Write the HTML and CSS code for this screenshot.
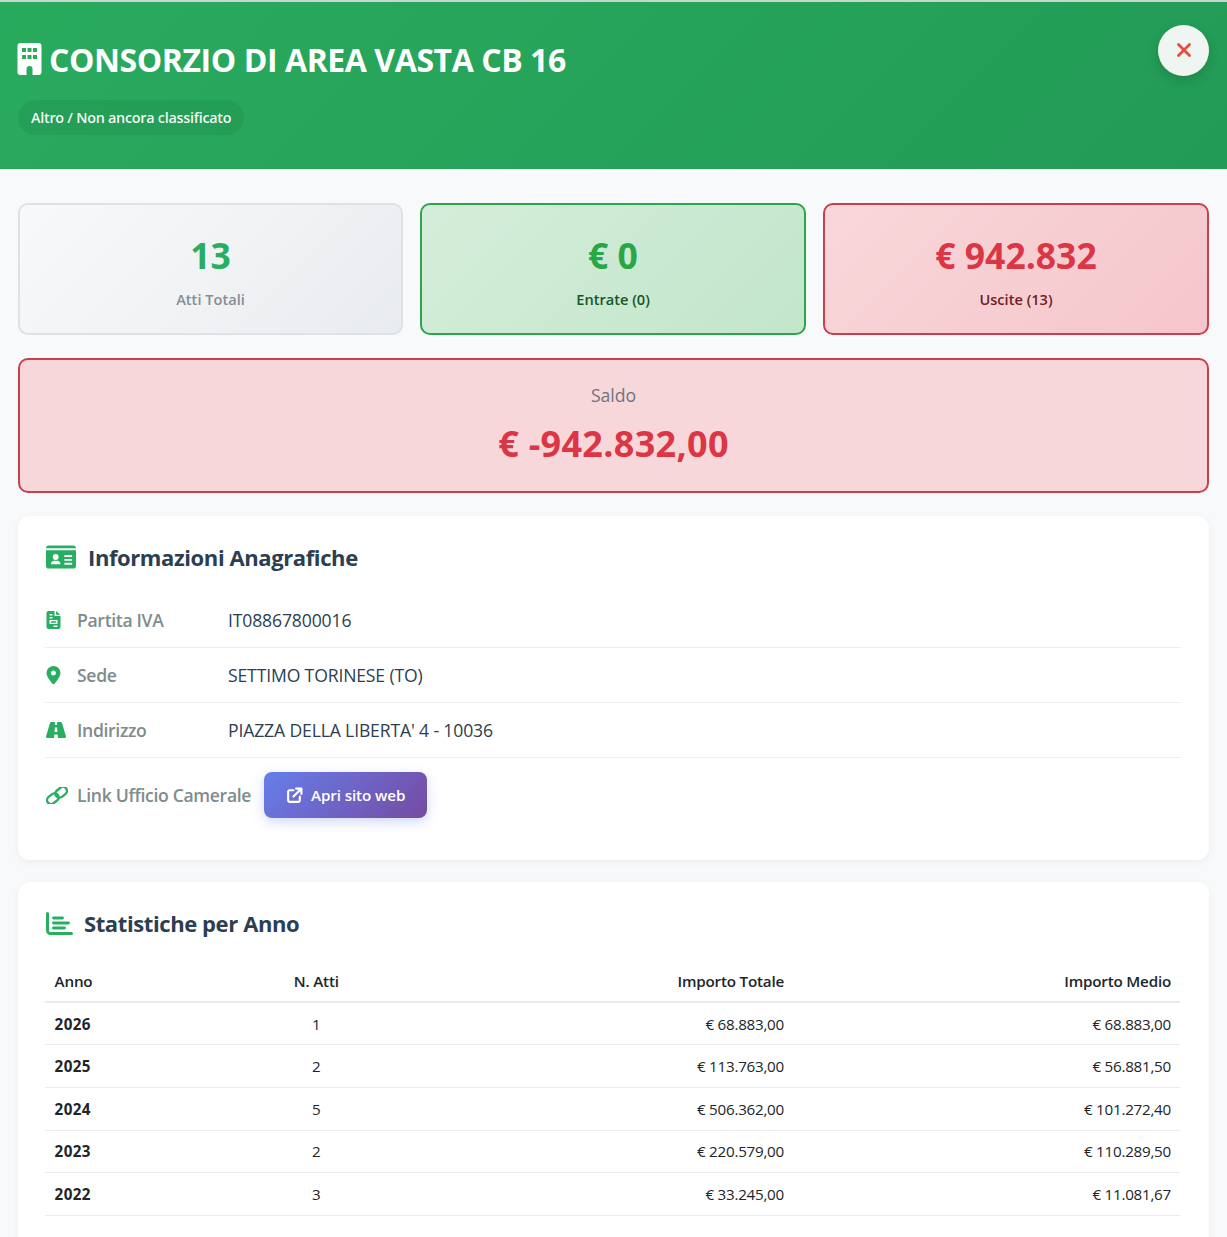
FILE: index.html
```html
<!DOCTYPE html>
<html lang="it">
<head>
    <meta charset="UTF-8">
    <meta name="viewport" content="width=device-width, initial-scale=1.0">
    <title>Consorzio di Area Vasta CB 16</title>
    <link rel="stylesheet" href="styles.css">
</head>
<body>
    <div class="topline"></div>
    <header class="header">
        <div class="header-text">
            <h1>
                <svg class="icon-building" viewBox="0 0 24 32"><path fill="currentColor" fill-rule="evenodd" d="M3 0h18a3 3 0 0 1 3 3v26a3 3 0 0 1-3 3h-6v-6a3 3 0 0 0-6 0v6H3a3 3 0 0 1-3-3V3a3 3 0 0 1 3-3zM4.500 5v4h4V5zm5.500 0v4h4V5zm5.500 0v4h4V5zM4.500 12v4h4v-4zm5.500 0v4h4v-4zm5.500 0v4h4v-4z"/></svg>
                <span>CONSORZIO DI AREA VASTA CB 16</span>
            </h1>
            <span class="badge">Altro / Non ancora classificato</span>
        </div>
        <button class="close" aria-label="Chiudi">
            <svg viewBox="0 0 16 16"><path d="M2.500 2.500l11 11M13.500 2.500l-11 11" stroke="currentColor" stroke-width="2.800" stroke-linecap="round" fill="none"/></svg>
        </button>
    </header>

    <main class="content">
        <div class="stats">
            <div class="stat stat-neutral">
                <div class="stat-value">13</div>
                <div class="stat-label">Atti Totali</div>
            </div>
            <div class="stat stat-green">
                <div class="stat-value">€ 0</div>
                <div class="stat-label">Entrate (0)</div>
            </div>
            <div class="stat stat-red">
                <div class="stat-value">€ 942.832</div>
                <div class="stat-label">Uscite (13)</div>
            </div>
        </div>

        <div class="saldo">
            <div class="saldo-label">Saldo</div>
            <div class="saldo-value">€ -942.832,00</div>
        </div>

        <section class="card card-info">
            <h2>
                <svg class="icon-title-id" viewBox="0 0 31 24"><path fill="currentColor" fill-rule="evenodd" d="M3 0h25a3 3 0 0 1 3 3v0H0v0a3 3 0 0 1 3-3zM0 5h31v16a3 3 0 0 1-3 3H3a3 3 0 0 1-3-3zm10 4a3 3 0 1 0 0 6 3 3 0 0 0 0-6zM5 19.500h10c0-2-1.500-3.500-3.500-3.500h-3C6.500 16 5 17.500 5 19.500zM19 10v2h8v-2zm0 4v2h8v-2zm0 4v2h8v-2z"/></svg>
                <span>Informazioni Anagrafiche</span>
            </h2>
            <div class="info-row">
                <div class="info-label">
                    <svg class="info-icon" viewBox="0 0 14 18"><path fill="currentColor" fill-rule="evenodd" d="M2 0h6v5h6v11a2 2 0 0 1-2 2H2a2 2 0 0 1-2-2V2a2 2 0 0 1 2-2zM9.500 0L14 3.800H9.500zM3 3v1.500h3V3zm0 3v1.500h3V6zm0 3v4h8V9zm1.300 1.300h5.400v1.400H4.300zM7 14.500V16h4v-1.500z"/></svg>
                    <span>Partita IVA</span>
                </div>
                <div class="info-value">IT08867800016</div>
            </div>
            <div class="info-row">
                <div class="info-label">
                    <svg class="info-icon" viewBox="0 0 14 18"><path fill="currentColor" fill-rule="evenodd" d="M7 0a7 7 0 0 1 7 7c0 3.500-4.500 9-6 10.700a1.300 1.300 0 0 1-2 0C4.500 16 0 10.500 0 7a7 7 0 0 1 7-7zm0 4.500a2.500 2.500 0 1 0 0 5 2.500 2.500 0 0 0 0-5z"/></svg>
                    <span>Sede</span>
                </div>
                <div class="info-value">SETTIMO TORINESE (TO)</div>
            </div>
            <div class="info-row">
                <div class="info-label">
                    <svg class="info-icon icon-road" viewBox="0 0 20 16"><path fill="currentColor" fill-rule="evenodd" d="M5.500 0h3.400l-.1 3h2.400l-.1-3h3.400c.7 0 1.300.4 1.500 1.100L20 14.500c.2.800-.4 1.500-1.200 1.500h-6.900l-.2-3.500H8.300l-.2 3.500H1.200C.4 16-.2 15.300 0 14.500L4 1.100C4.200.4 4.800 0 5.500 0zM8.800 5.500l-.2 4.500h2.800l-.2-4.500z"/></svg>
                    <span>Indirizzo</span>
                </div>
                <div class="info-value">PIAZZA DELLA LIBERTA' 4 - 10036</div>
            </div>
            <div class="info-row info-row-last">
                <div class="info-label">
                    <svg class="info-icon icon-link" viewBox="0 0 22 17"><g transform="rotate(-38 11 8.500)" fill="none" stroke="currentColor" stroke-width="2.300"><rect x="-0.500" y="4.500" width="12.500" height="8" rx="4"/><rect x="10" y="4.500" width="12.500" height="8" rx="4"/></g></svg>
                    <span>Link Ufficio Camerale</span>
                </div>
                <a class="site-btn" href="#">
                    <svg viewBox="0 0 16 16"><path d="M7 3H3.500A1.500 1.500 0 0 0 2 4.500v8A1.500 1.500 0 0 0 3.500 14h8a1.500 1.500 0 0 0 1.500-1.500V9M7 9l7-7M9.500 1.500h5v5" fill="none" stroke="currentColor" stroke-width="2" stroke-linecap="round" stroke-linejoin="round"/></svg>
                    <span>Apri sito web</span>
                </a>
            </div>
        </section>

        <section class="card card-years">
            <h2>
                <svg class="icon-title-chart" viewBox="0 0 27 23"><path fill="none" stroke="currentColor" stroke-width="3" stroke-linecap="round" stroke-linejoin="round" d="M1.500 1.500V18.500a3 3 0 0 0 3 3h21"/><path fill="none" stroke="currentColor" stroke-width="2.800" stroke-linecap="round" d="M7.500 6h9M7.500 11h15M7.500 16h11"/></svg>
                <span>Statistiche per Anno</span>
            </h2>
            <table class="years">
                <colgroup>
                    <col class="col-anno">
                    <col class="col-atti">
                    <col class="col-totale">
                    <col class="col-medio">
                </colgroup>
                <thead>
                    <tr><th>Anno</th><th class="center">N. Atti</th><th class="right">Importo Totale</th><th class="right">Importo Medio</th></tr>
                </thead>
                <tbody>
                    <tr><td><b>2026</b></td><td class="center">1</td><td class="right">€ 68.883,00</td><td class="right">€ 68.883,00</td></tr>
                    <tr><td><b>2025</b></td><td class="center">2</td><td class="right">€ 113.763,00</td><td class="right">€ 56.881,50</td></tr>
                    <tr><td><b>2024</b></td><td class="center">5</td><td class="right">€ 506.362,00</td><td class="right">€ 101.272,40</td></tr>
                    <tr><td><b>2023</b></td><td class="center">2</td><td class="right">€ 220.579,00</td><td class="right">€ 110.289,50</td></tr>
                    <tr><td><b>2022</b></td><td class="center">3</td><td class="right">€ 33.245,00</td><td class="right">€ 11.081,67</td></tr>
                </tbody>
            </table>
        </section>
    </main>
</body>
</html>
```

FILE: styles.css
```css
* {
    box-sizing: border-box;
}
html, body {
    height: 1237px;
    overflow: hidden;
}
body {
    margin: 0;
    font-family: "Open Sans", "Noto Sans", sans-serif;
    background: #f8f9fa;
    color: #212529;
}
.topline {
    height: 2px;
    background: #c9d6cf;
}
.header {
    height: 167px;
    padding: 23px 18px 0 18px;
    display: flex;
    justify-content: space-between;
    align-items: flex-start;
    color: white;
    background: linear-gradient(135deg, #29ab5e, #229b56);
}
.header h1 {
    margin: 0;
    display: flex;
    align-items: center;
    gap: 7px;
    height: 68px;
    font-size: 32px;
    font-weight: 700;
    letter-spacing: -0.43px;
}
.icon-building {
    width: 25px;
    height: 32px;
    margin-left: -1px;
}
.badge {
    display: inline-block;
    margin-top: 7px;
    padding: 7px 13px;
    font-size: 14.400px;
    font-weight: 600;
    letter-spacing: -0.27px;
    line-height: 21px;
    border-radius: 18px;
    color: rgba(255, 255, 255, 0.94);
    background: rgba(0, 0, 0, 0.06);
}
.close {
    width: 51px;
    height: 51px;
    padding: 0;
    border: none;
    border-radius: 50%;
    display: flex;
    justify-content: center;
    align-items: center;
    color: #e74c3c;
    background: #eff5f1;
    box-shadow: 0 4px 12px rgba(0, 0, 0, 0.15);
}
.close svg {
    width: 16px;
    height: 16px;
    margin-top: -2px;
}
.content {
    padding: 34px 18px 0 18px;
}
.stats {
    display: grid;
    grid-template-columns: 385fr 386fr 386fr;
    gap: 17px;
}
.stat {
    height: 132px;
    padding-top: 27px;
    text-align: center;
    border: 2px solid;
    border-radius: 10px;
}
.stat-value {
    font-size: 35.500px;
    font-weight: 700;
    line-height: 46px;
}
.stat-label {
    margin-top: 11px;
    font-size: 14.600px;
    font-weight: 600;
    line-height: 20px;
}
.stat-neutral {
    border-color: #dee2e6;
    background: linear-gradient(135deg, #f8f9fa, #e9ecef);
}
.stat-neutral .stat-value {
    color: #27ae60;
}
.stat-neutral .stat-label {
    color: #868e96;
}
.stat-green {
    border-color: #2ea44f;
    background: linear-gradient(135deg, #d4edda, #c3e6cb);
}
.stat-green .stat-value {
    color: #28a745;
}
.stat-green .stat-label {
    color: #155724;
}
.stat-red {
    border-color: #c8404f;
    background: linear-gradient(135deg, #f8d7da, #f5c6cb);
}
.stat-red .stat-value {
    color: #dc3545;
}
.stat-red .stat-label {
    color: #721c24;
}
.saldo {
    height: 135px;
    margin-top: 23px;
    padding-top: 23px;
    text-align: center;
    border: 2px solid #c8404f;
    border-radius: 10px;
    background: #f8d7da;
}
.saldo-label {
    font-size: 17.600px;
    line-height: 24px;
    color: #6c757d;
}
.saldo-value {
    margin-top: 14px;
    font-size: 36px;
    font-weight: 700;
    letter-spacing: 0.3px;
    line-height: 46px;
    color: #dc3545;
}
.card {
    margin-top: 23px;
    padding: 26px 28px 0 27px;
    border-radius: 12px;
    background: white;
    box-shadow: 0 2px 8px rgba(0, 0, 0, 0.05);
}
.card-info {
    height: 344px;
}
.card-years {
    margin-top: 22px;
    height: 400px;
}
.card h2 {
    margin: 0;
    display: flex;
    align-items: center;
    height: 30px;
    font-size: 22px;
    font-weight: 700;
    letter-spacing: -0.4px;
    color: #2c3e50;
}
.icon-title-id {
    width: 30px;
    height: 24px;
    margin: 0 12px 0 1px;
    color: #27ae60;
}
.icon-title-chart {
    width: 27px;
    height: 23px;
    margin: 0 11px 0 1px;
    color: #27ae60;
}
.info-row {
    display: flex;
    align-items: center;
    height: 55px;
    font-size: 17.600px;
    border-bottom: 1px solid #eceef0;
}
.card-info h2 + .info-row {
    margin-top: 21px;
}
.info-row-last {
    height: 74px;
    border-bottom: none;
}
.info-label {
    display: flex;
    align-items: center;
    min-width: 183px;
    font-weight: 600;
    letter-spacing: -0.33px;
    color: #7f8c8d;
    flex-shrink: 0;
    white-space: nowrap;
}
.info-icon {
    width: 15px;
    height: 18px;
    margin: 0 16px 0 1px;
    color: #27ae60;
    flex-shrink: 0;
}
.icon-road {
    width: 20px;
    height: 16px;
    margin: 0 11px 0 1px;
}
.icon-link {
    width: 22px;
    height: 17px;
    margin: 0 9px 0 1px;
}
.info-value {
    letter-spacing: -0.15px;
    color: #2c3e50;
}
.site-btn {
    display: flex;
    align-items: center;
    gap: 8px;
    width: 163px;
    height: 46px;
    justify-content: center;
    margin-left: 13px;
    font-size: 15.200px;
    font-weight: 600;
    letter-spacing: -0.1px;
    color: white;
    text-decoration: none;
    border-radius: 8px;
    background: linear-gradient(135deg, #667eea, #764ba2);
    box-shadow: 0 4px 12px rgba(102, 126, 234, 0.3);
}
.site-btn svg {
    width: 17px;
    height: 17px;
}
.years {
    width: 1135px;
    margin-top: 22px;
    table-layout: fixed;
    border-collapse: collapse;
    font-size: 15.200px;
}
.col-anno {
    width: 170px;
}
.col-atti {
    width: 202px;
}
.col-totale {
    width: 376px;
}
.col-medio {
    width: 387px;
}
.years th {
    height: 42px;
    padding: 0 9px 0 9.600px;
    font-weight: 600;
    letter-spacing: -0.2px;
    text-align: left;
    border-bottom: 2px solid #e9ecef;
}
.years td {
    height: 42.700px;
    padding: 0 9px 0 9.600px;
    letter-spacing: -0.25px;
    border-bottom: 1px solid #e9ecef;
}
.years b {
    letter-spacing: 0.4px;
}
.years .center {
    text-align: center;
}
.years .right {
    text-align: right;
}
```
